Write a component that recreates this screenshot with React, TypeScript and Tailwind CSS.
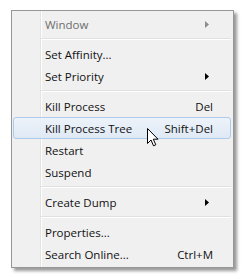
import { Fragment } from "react";

type Item =
  | { sep: true }
  | { label: string; shortcut?: string; submenu?: boolean; disabled?: boolean; hot?: boolean };

const items: Item[] = [
  { label: "Window", submenu: true, disabled: true },
  { sep: true },
  { label: "Set Affinity..." },
  { label: "Set Priority", submenu: true },
  { sep: true },
  { label: "Kill Process", shortcut: "Del" },
  { label: "Kill Process Tree", shortcut: "Shift+Del", hot: true },
  { label: "Restart" },
  { label: "Suspend" },
  { sep: true },
  { label: "Create Dump", submenu: true },
  { sep: true },
  { label: "Properties..." },
  { label: "Search Online...", shortcut: "Ctrl+M" },
];

function Arrow({ gray }: { gray?: boolean }) {
  return (
    <svg width="4" height="7" viewBox="0 0 4 7" className="block">
      <path d="M0 0 L4 3.5 L0 7 Z" fill={gray ? "#8d8d8d" : "#000"} />
    </svg>
  );
}

function Cursor() {
  return (
    <svg width="12" height="19" viewBox="0 0 12 19" className="block">
      <path
        d="M0.5 0.5 L0.5 15.5 L4 12 L6.5 17.8 L8.8 16.8 L6.3 11.2 L11 11.2 Z"
        fill="#fff"
        stroke="#000"
        strokeWidth="1"
        strokeLinejoin="miter"
      />
    </svg>
  );
}

export default function App() {
  return (
    <div className="h-[279px] w-[245px] bg-white pl-[11px] pt-[10px] font-['Segoe_UI','Open_Sans',sans-serif] text-[11.5px] text-[#111]">
      <div className="relative w-[223px] border border-[#979797] bg-[#f0f0f0] pb-[2px] pl-[1px] pr-[2px] pt-[2px] shadow-[3px_3px_3px_rgba(0,0,0,0.4)]">
        {/* gutter */}
        <div className="absolute bottom-0 left-[28px] top-0 w-[1px] bg-[#e2e3e3]" />
        <div className="absolute bottom-0 left-[29px] top-0 w-[1px] bg-white" />

        <div className="relative">
          {items.map((it, i) =>
            "sep" in it ? (
              <div key={i} className="flex h-[8px] flex-col justify-center pl-[28px]">
                <div className="h-[1px] bg-[#e0e0e0]" />
                <div className="h-[1px] bg-white" />
              </div>
            ) : (
              <Fragment key={i}>
                <div
                  className={
                    "flex h-[22px] items-center rounded-[3px] border pl-[31px] pr-[17px] pt-[1px] " +
                    (it.hot
                      ? "border-[#aecbec] bg-[linear-gradient(rgba(236,243,251,0.85),rgba(220,232,246,0.85))]"
                      : "border-transparent")
                  }
                >
                  <span className={"flex-1 leading-none " + (it.disabled ? "text-[#6d6d6d]" : "")}>
                    {it.label}
                  </span>
                  {it.shortcut && <span className="leading-none">{it.shortcut}</span>}
                  {it.submenu && (
                    <span className="mr-[4px]">
                      <Arrow gray={it.disabled} />
                    </span>
                  )}
                </div>
              </Fragment>
            )
          )}
        </div>

        {/* mouse pointer */}
        <div className="absolute left-[135px] top-[117px]">
          <Cursor />
        </div>
      </div>
    </div>
  );
}
